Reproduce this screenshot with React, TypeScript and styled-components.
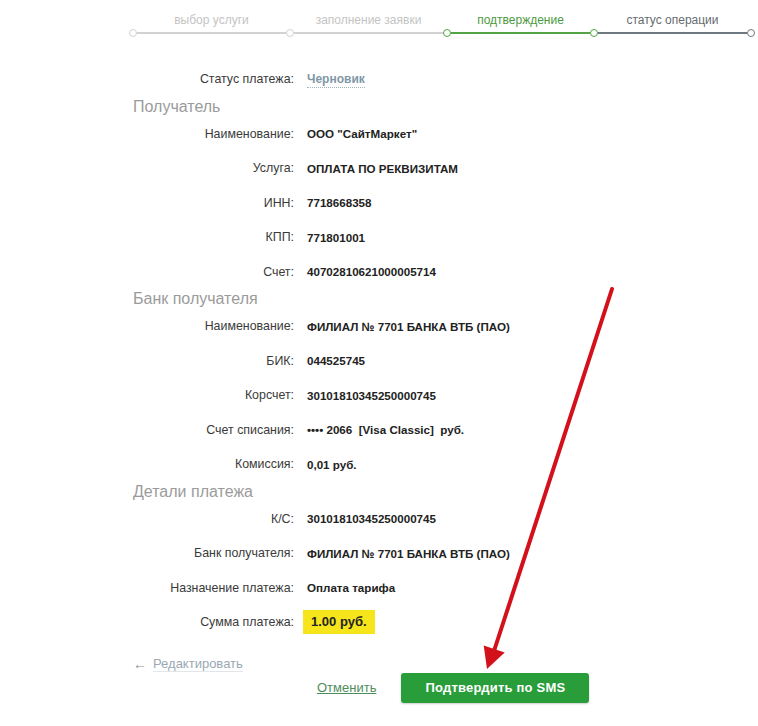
import React from 'react';
import styled, { createGlobalStyle } from 'styled-components';

const GlobalStyle = createGlobalStyle`
  html, body {
    margin: 0;
    padding: 0;
    background: #ffffff;
    font-family: "Liberation Sans", Arial, sans-serif;
  }
`;

type StepState = 'done' | 'active' | 'next';

interface Step {
  label: string;
  state: StepState;
  width: number;
}

interface Row {
  label: string;
  value: string;
}

interface Section {
  title?: string;
  rows: Row[];
}

const steps: Step[] = [
  { label: 'выбор услуги', state: 'done', width: 157 },
  { label: 'заполнение заявки', state: 'done', width: 157 },
  { label: 'подтверждение', state: 'active', width: 147 },
  { label: 'статус операции', state: 'next', width: 157 },
];

const sections: Section[] = [
  {
    title: 'Получатель',
    rows: [
      { label: 'Наименование:', value: 'ООО "СайтМаркет"' },
      { label: 'Услуга:', value: 'ОПЛАТА ПО РЕКВИЗИТАМ' },
      { label: 'ИНН:', value: '7718668358' },
      { label: 'КПП:', value: '771801001' },
      { label: 'Счет:', value: '40702810621000005714' },
    ],
  },
  {
    title: 'Банк получателя',
    rows: [
      { label: 'Наименование:', value: 'ФИЛИАЛ № 7701 БАНКА ВТБ (ПАО)' },
      { label: 'БИК:', value: '044525745' },
      { label: 'Корсчет:', value: '30101810345250000745' },
      { label: 'Счет списания:', value: '•••• 2066  [Visa Classic]  руб.' },
      { label: 'Комиссия:', value: '0,01 руб.' },
    ],
  },
  {
    title: 'Детали платежа',
    rows: [
      { label: 'К/С:', value: '30101810345250000745' },
      { label: 'Банк получателя:', value: 'ФИЛИАЛ № 7701 БАНКА ВТБ (ПАО)' },
      { label: 'Назначение платежа:', value: 'Оплата тарифа' },
    ],
  },
];

const labelColors: Record<StepState, string> = {
  done: '#c4c4c4',
  active: '#4b9a3f',
  next: '#666b70',
};

const lineColors: Record<StepState, string> = {
  done: '#d2d2d2',
  active: '#52a444',
  next: '#6d7880',
};

const Page = styled.div`
  position: relative;
  width: 758px;
  height: 726px;
  overflow: hidden;
  background: #fff;
`;

const Content = styled.div`
  margin-left: 129px;
  width: 630px;
`;

const Stepper = styled.div`
  display: flex;
  align-items: flex-end;
  padding-top: 13px;
`;

const StepBox = styled.div<{ $width: number }>`
  width: ${({ $width }) => $width}px;
  display: flex;
  flex-direction: column;
`;

const StepLabel = styled.div<{ $state: StepState }>`
  font-size: 12px;
  line-height: 14px;
  text-align: center;
  padding-left: 8px;
  color: ${({ $state }) => labelColors[$state]};
  margin-bottom: 2px;
`;

const Track = styled.div`
  display: flex;
  align-items: center;
  height: 8px;
`;

const Dot = styled.span<{ $color: string }>`
  width: 8px;
  height: 8px;
  box-sizing: border-box;
  border-radius: 50%;
  border: 1.5px solid ${({ $color }) => $color};
  background: #fff;
  flex-shrink: 0;
`;

const Line = styled.span<{ $color: string }>`
  flex: 1;
  height: 2px;
  background: ${({ $color }) => $color};
`;

const Rows = styled.div`
  margin-top: 25px;
  margin-left: 4px;
`;

const SectionTitle = styled.div`
  font-size: 16px;
  line-height: 20px;
  color: #9b9b9b;
`;

const RowLine = styled.div`
  display: grid;
  grid-template-columns: 161px 1fr;
  column-gap: 13px;
  align-items: center;
  height: 34.5px;
`;

const Label = styled.div`
  text-align: right;
  font-size: 12.4px;
  color: #3a3a3a;
  white-space: nowrap;
`;

const Value = styled.div`
  font-size: 11.6px;
  font-weight: bold;
  color: #222;
  white-space: pre;
`;

const StatusLink = styled.span`
  font-size: 12px;
  font-weight: bold;
  color: #7f98a6;
  border-bottom: 1px dotted #9fb3bf;
  padding-bottom: 1px;
`;

const Amount = styled.span`
  display: inline-block;
  margin-left: -4px;
  padding: 4px 8px 5px;
  background: #f7e51c;
  font-size: 13px;
  font-weight: bold;
  color: #222;
`;

const EditLink = styled.div`
  margin-top: 16px;
  display: flex;
  align-items: center;
  gap: 6px;
  font-size: 13px;
  color: #9aa9b3;
`;

const EditArrow = styled.span`
  color: #8a8a8a;
  font-size: 14px;
`;

const EditText = styled.span`
  border-bottom: 1px solid #e1e6ea;
  line-height: 15px;
`;

const Actions = styled.div`
  display: flex;
  align-items: center;
  gap: 25px;
  padding-left: 184px;
  margin-top: 1px;
`;

const CancelLink = styled.a`
  font-size: 13px;
  color: #4f8c5c;
  text-decoration: underline;
  cursor: pointer;
`;

const ConfirmButton = styled.button`
  width: 188px;
  height: 30px;
  border: none;
  border-radius: 3px;
  background: #289d39;
  color: #fff;
  font-family: "Liberation Sans", Arial, sans-serif;
  font-size: 13px;
  font-weight: bold;
  letter-spacing: 0.2px;
  box-shadow: 0 1px 2px rgba(0, 0, 0, 0.2);
  cursor: pointer;
`;

const ArrowOverlay = styled.svg`
  position: absolute;
  left: 0;
  top: 0;
  pointer-events: none;
`;

const App: React.FC = () => {
  return (
    <Page>
      <GlobalStyle />
      <Content>
        <Stepper>
          {steps.map((s) => (
            <StepBox key={s.label} $width={s.width}>
              <StepLabel $state={s.state}>{s.label}</StepLabel>
              <Track>
                <Dot $color={lineColors[s.state === 'next' ? 'active' : s.state]} />
                <Line $color={lineColors[s.state]} />
              </Track>
            </StepBox>
          ))}
          <Track>
            <Dot $color={lineColors.next} />
          </Track>
        </Stepper>

        <Rows>
          <RowLine>
            <Label>Статус платежа:</Label>
            <Value>
              <StatusLink>Черновик</StatusLink>
            </Value>
          </RowLine>
          {sections.map((sec) => (
            <React.Fragment key={sec.title}>
              <SectionTitle>{sec.title}</SectionTitle>
              {sec.rows.map((r) => (
                <RowLine key={sec.title + r.label}>
                  <Label>{r.label}</Label>
                  <Value>{r.value}</Value>
                </RowLine>
              ))}
            </React.Fragment>
          ))}
          <RowLine>
            <Label>Сумма платежа:</Label>
            <Value>
              <Amount>1.00 руб.</Amount>
            </Value>
          </RowLine>

          <EditLink>
            <EditArrow>←</EditArrow>
            <EditText>Редактировать</EditText>
          </EditLink>

          <Actions>
            <CancelLink>Отменить</CancelLink>
            <ConfirmButton>Подтвердить по SMS</ConfirmButton>
          </Actions>
        </Rows>
      </Content>

      <ArrowOverlay width="758" height="726" viewBox="0 0 758 726">
        <line x1="612" y1="289" x2="494" y2="651" stroke="#d3111b" strokeWidth="4" strokeLinecap="round" />
        <polygon points="487,669 504.7,652.4 483.7,645.6" fill="#d3111b" />
      </ArrowOverlay>
    </Page>
  );
};

export default App;
